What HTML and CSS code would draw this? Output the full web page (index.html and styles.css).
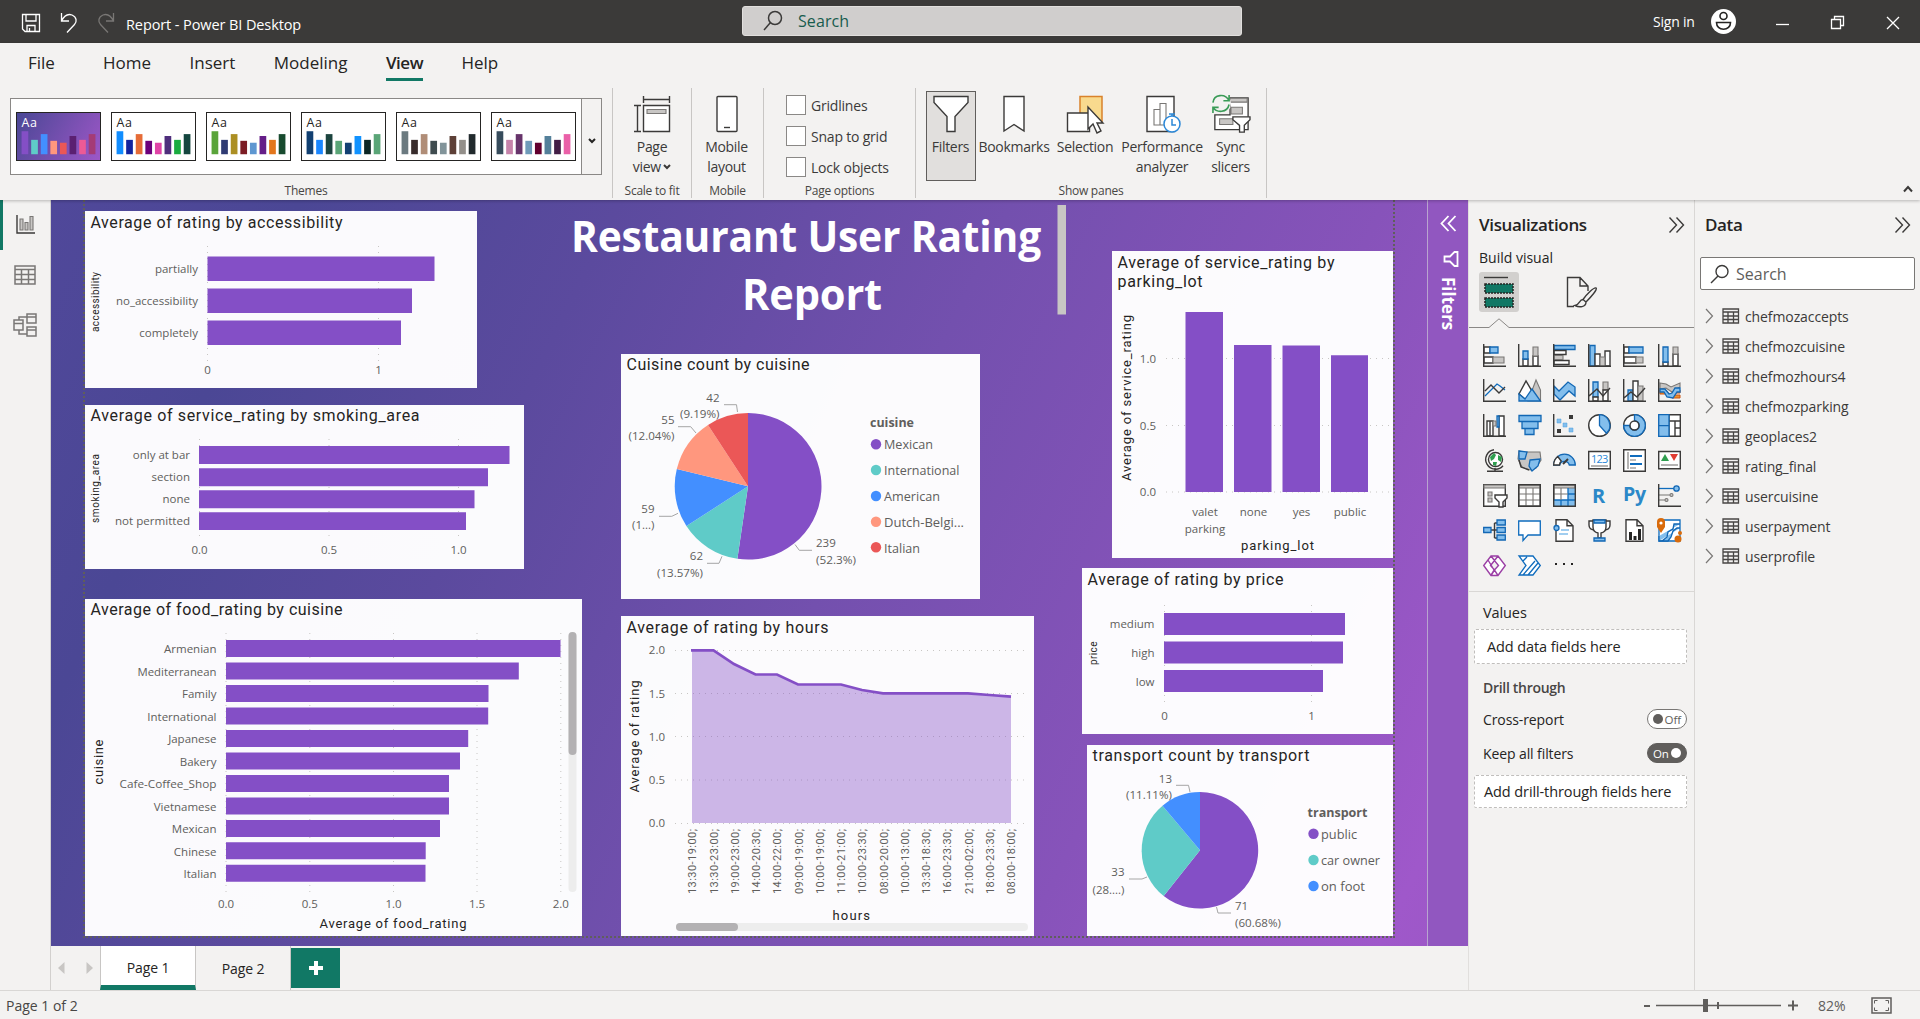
FILE: index.html
```html
<!DOCTYPE html>
<html lang="en">
<head>
<meta charset="utf-8">
<title>Report - Power BI Desktop</title>
<link rel="stylesheet" href="styles.css">
</head>
<body>
<header class="titlebar">
  <div class="quick">
    <svg width="20" height="20" viewBox="0 0 20 20"><path d="M1.5 1.5h17v17H4l-2.500-2.500zM5 1.500V8h10V1.500M6 18.500v-6h8v6M8.500 15v3.500"/></svg>
    <svg width="18" height="20" viewBox="0 0 18 20"><path d="M1.500 0v8h7.500M1.500 8C4 3 8 .5 12 2c5 2 5 7 2.500 9.500L7 19.500"/></svg>
    <svg class="dim" width="18" height="20" viewBox="0 0 18 20"><path d="M16.500 0v8H9M16.500 8C14 3 10 .5 6 2c-5 2-5 7-2.500 9.500L11 19.500"/></svg>
    <span>Report - Power BI Desktop</span>
  </div>
  <div class="topsearch">
    <svg width="20" height="22" viewBox="0 0 20 22"><circle cx="12" cy="8" r="6.500"/><path d="M7.500 12.500 1 20"/></svg>
    <span>Search</span>
  </div>
  <div class="account">
    <span>Sign in</span>
    <svg width="25" height="25" viewBox="0 0 25 25"><circle class="disc" cx="12.500" cy="12.500" r="12.500"/><circle class="ink" cx="12.500" cy="7" r="3.500"/><path class="ink" d="M5.500 13.500h14c0 4-3 6.700-7 6.700s-7-2.700-7-6.700z"/></svg>
  </div>
  <div class="winbtns">
    <svg width="14" height="14" viewBox="0 0 14 14"><path d="M0 8.500h13"/></svg>
    <svg width="14" height="14" viewBox="0 0 14 14"><path d="M.5 3.500h9v9h-9zM3.500 3.500v-3h9v9h-3"/></svg>
    <svg width="14" height="14" viewBox="0 0 14 14"><path d="M1 1l12 12M13 1 1 13"/></svg>
  </div>
</header>

<section class="ribbon">
  <nav class="tabs"><a>File</a><a>Home</a><a>Insert</a><a>Modeling</a><a class="on">View</a><a>Help</a></nav>
  <div class="groups">
    <div class="group themes">
      <div class="gallery">
        <div class="thumbs">
          <svg class="thumb first" viewBox="0 0 85 49"><text x="4" y="15">Aa</text><path stroke="#844fc6" d="M7.500 43V19"/><path stroke="#5fcbc8" d="M17.500 43V28"/><path stroke="#438fff" d="M27.500 43V22"/><path stroke="#ff977e" d="M37.500 43V29"/><path stroke="#eb5757" d="M47.500 43V31"/><path stroke="#5b2071" d="M57.500 43V24"/><path stroke="#ec5a96" d="M67.500 43V28"/><path stroke="#a43b76" d="M77.500 43V22"/></svg>
          <svg class="thumb" viewBox="0 0 85 49"><text x="4" y="15">Aa</text><path stroke="#118dff" d="M7.500 43V19"/><path stroke="#12239e" d="M17.500 43V28"/><path stroke="#e66c37" d="M27.500 43V22"/><path stroke="#6b007b" d="M37.500 43V29"/><path stroke="#e044a7" d="M47.500 43V31"/><path stroke="#4f2e7c" d="M57.500 43V24"/><path stroke="#1aab40" d="M67.500 43V28"/><path stroke="#15463f" d="M77.500 43V22"/></svg>
          <svg class="thumb" viewBox="0 0 85 49"><text x="4" y="15">Aa</text><path stroke="#5aa43a" d="M7.500 43V19"/><path stroke="#2f3b73" d="M17.500 43V28"/><path stroke="#ac8f23" d="M27.500 43V22"/><path stroke="#7c1c24" d="M37.500 43V29"/><path stroke="#5e97d1" d="M47.500 43V31"/><path stroke="#651e88" d="M57.500 43V24"/><path stroke="#e3761c" d="M67.500 43V28"/><path stroke="#184b2f" d="M77.500 43V22"/></svg>
          <svg class="thumb" viewBox="0 0 85 49"><text x="4" y="15">Aa</text><path stroke="#124072" d="M7.500 43V19"/><path stroke="#1a86ff" d="M17.500 43V28"/><path stroke="#1c443f" d="M27.500 43V22"/><path stroke="#5aa577" d="M37.500 43V29"/><path stroke="#124072" d="M47.500 43V31"/><path stroke="#1192ff" d="M57.500 43V24"/><path stroke="#0c2624" d="M67.500 43V28"/><path stroke="#5aa577" d="M77.500 43V22"/></svg>
          <svg class="thumb" viewBox="0 0 85 49"><text x="4" y="15">Aa</text><path stroke="#6b7a80" d="M7.500 43V19"/><path stroke="#382c2c" d="M17.500 43V28"/><path stroke="#b08d77" d="M27.500 43V22"/><path stroke="#3f4c4f" d="M37.500 43V29"/><path stroke="#82949a" d="M47.500 43V31"/><path stroke="#5d4037" d="M57.500 43V24"/><path stroke="#938f8a" d="M67.500 43V28"/><path stroke="#212a2d" d="M77.500 43V22"/></svg>
          <svg class="thumb" viewBox="0 0 85 49"><text x="4" y="15">Aa</text><path stroke="#374c5c" d="M7.500 43V19"/><path stroke="#c683aa" d="M17.500 43V28"/><path stroke="#67346b" d="M27.500 43V22"/><path stroke="#6f9bba" d="M37.500 43V29"/><path stroke="#62002e" d="M47.500 43V31"/><path stroke="#54809a" d="M57.500 43V24"/><path stroke="#431e46" d="M67.500 43V28"/><path stroke="#ea60a8" d="M77.500 43V22"/></svg>
        </div>
        <div class="more"><svg width="8" height="6" viewBox="0 0 8 6"><path d="M1 1l3 3 3-3"/></svg></div>
      </div>
      <div class="gname">Themes</div>
    </div>
    <div class="group scale">
      <div class="btns"><div class="btn">
        <svg width="36" height="38" viewBox="0 0 36 38"><path class="k" d="M9.500 1v7M35.500 1v7M9.500 4.500h26M0 10.500h7M0 36.500h7M3.500 10.500v26"/><path class="k w" d="M9.500 10.500h26v26h-26z"/><path class="g" d="M13 14.500h19v4H13z"/></svg>
        <span>Page<br>view <svg width="8" height="6" viewBox="0 0 8 6"><path class="k k2" d="M1 1l3 3 3-3"/></svg></span>
      </div></div>
      <div class="gname">Scale to fit</div>
    </div>
    <div class="group mobile">
      <div class="btns"><div class="btn">
        <svg width="22" height="38" viewBox="0 0 22 38"><rect class="k w" x="1" y="1.500" width="20" height="35" rx="1"/><path class="k" d="M8 32.500h6"/></svg>
        <span>Mobile<br>layout</span>
      </div></div>
      <div class="gname">Mobile</div>
    </div>
    <div class="group options">
      <div class="checks"><label><i></i>Gridlines</label><label><i></i>Snap to grid</label><label><i></i>Lock objects</label></div>
      <div class="gname">Page options</div>
    </div>
    <div class="group panes">
      <div class="btns">
        <div class="btn sel"><svg width="36" height="38" viewBox="0 0 36 38"><path class="k w" d="M1 1.500h34v6L22 21.500v15h-8v-15L1 7.500z"/></svg><span>Filters</span></div>
        <div class="btn b2"><svg width="22" height="38" viewBox="0 0 22 38"><path class="k w" d="M1 1.500h20v34.500l-10-6.500-10 6.500z"/></svg><span>Bookmarks</span></div>
        <div class="btn b3"><svg width="40" height="38" viewBox="0 0 40 38"><path d="M15 1.500h22v25H15z" fill="#f8da8e" stroke="#d9822b" stroke-width="1.500"/><path class="k w" d="M2.500 18h22v18.500h-22z"/><path class="k w" d="M23 12v22l5-5 4 9 4-2-4-8h6z"/></svg><span>Selection</span></div>
        <div class="btn b4"><svg width="36" height="38" viewBox="0 0 36 38"><path class="k w" d="M3 1.500h27v35H3z"/><path class="g" fill-opacity="0" d="M10 14.500h6V30h-6zM16 8.500h6V30h-6z"/><circle cx="28" cy="29" r="8" fill="#fff" stroke="#2b88d8" stroke-width="1.500"/><path d="M28 24v6h4M25 19h6M28 19v2" fill="none" stroke="#2b88d8" stroke-width="1.500"/></svg><span>Performance<br>analyzer</span></div>
        <div class="btn b5"><svg width="42" height="40" viewBox="0 0 42 40"><path class="k w" d="M20 3h19v33.500H4V21h16z"/><path class="g" d="M20 3.500h18v4H20zM21 13h12v7H21zM9 25h14v6H9z"/><path class="k w" d="M23 23h18v3l-6 6v7h-5v-7l-7-6z"/><circle cx="10" cy="9" r="11" fill="#f3f2f1"/><path d="M2 8c1-9 13-10 17-2M19 0v6h-6M19 10c-2 9-13 9-17 3M2 19v-6h6" fill="none" stroke="#3a9b57" stroke-width="1.700"/></svg><span>Sync<br>slicers</span></div>
      </div>
      <div class="gname">Show panes</div>
    </div>
    <div class="collapse"><svg width="10" height="8" viewBox="0 0 10 8"><path class="k k2" d="M1 6.500l4-4.500 4 4.500"/></svg></div>
  </div>
</section>

<main class="work">
  <nav class="rail">
    <div class="on"><svg width="19" height="19" viewBox="0 0 19 19"><path class="k" d="M1 0v18h18"/><path class="k g" d="M4 4h3v11H4zM9 7.500h3V15H9zM14 1.500h3V15h-3z"/></svg></div>
    <div><svg width="22" height="20" viewBox="0 0 22 20"><path class="m" d="M1 1h20v18H1zM1 4.500h20M1 9.500h20M1 14.500h20M7.500 4.500V19M14.500 4.500V19"/></svg></div>
    <div><svg width="24" height="24" viewBox="0 0 24 24"><path class="m" d="M1 7h9v10H1zM1 10.500h9M14 1h9v9h-9zM14 4h9M14 14h9v9h-9zM14 17h9M6 7V4h8M6 17v4h8"/></svg></div>
  </nav>

  <section class="center">
    <div class="canvas">
      <div class="page-edge"></div>
      <svg class="heading" viewBox="566 204 502 112"><text x="571" y="251.500" textLength="470" lengthAdjust="spacingAndGlyphs">Restaurant User Rating</text><text x="742" y="309.500" textLength="140" lengthAdjust="spacingAndGlyphs">Report</text><path fill="#c8c6c4" d="M1057.500 205h8.500v109.500h-8.500z"/></svg>

      <svg class="card c1" viewBox="85 211 392 177">
        <text class="h" x="90.500" y="228" textLength="252">Average of rating by accessibility</text>
        <path class="grid" d="M207.500 246v116M378.500 246v116"/>
        <path class="bar" d="M207.500 256.500h227v24.500h-227zM207.500 288.500h204.500v24.500H207.500zM207.500 320.500h193.500v24.500H207.500z"/>
        <g class="t e"><text x="198" y="273">partially</text><text x="198" y="305" textLength="82" lengthAdjust="spacingAndGlyphs">no_accessibility</text><text x="198" y="337">completely</text></g>
        <g class="t c"><text x="207.500" y="373.500">0</text><text x="378.500" y="373.500">1</text></g>
        <text class="a s" transform="translate(99 332) rotate(-90)" textLength="60">accessibility</text>
      </svg>

      <svg class="card c2" viewBox="85 405 439 164">
        <text class="h" x="90.500" y="421" textLength="329">Average of service_rating by smoking_area</text>
        <path class="grid" d="M199.500 439v101M329 439v101M458.500 439v101"/>
        <path class="bar" d="M199 446h310.500v18H199zM199 468.200h289v18H199zM199 490.200h275.500v18H199zM199 512.200h267v17.800H199z"/>
        <g class="t e"><text x="190" y="459">only at bar</text><text x="190" y="481">section</text><text x="190" y="503">none</text><text x="190" y="525" textLength="75" lengthAdjust="spacingAndGlyphs">not permitted</text></g>
        <g class="t c"><text x="199.500" y="554">0.0</text><text x="329" y="554">0.5</text><text x="458.500" y="554">1.0</text></g>
        <text class="a s" transform="translate(99 523) rotate(-90)" textLength="69">smoking_area</text>
      </svg>

      <svg class="card c3" viewBox="85 599 497 337">
        <text class="h" x="90.500" y="615" textLength="252">Average of food_rating by cuisine</text>
        <path class="grid" d="M226 633v259M309.800 633v259M393.500 633v259M477 633v259M560.800 633v259"/>
        <path class="bar" d="M226 640h334.500v17h-334.500zM226 662.500h292.800v17H226zM226 685h262.500v17h-262.500zM226 707.400h262.200v17H226zM226 730h242.200v17H226zM226 752.400H460v17H226zM226 775H449v17H226zM226 797.400H449v17H226zM226 820H440v17H226zM226 842.200h199.700v17H226zM226 864.700h199.500v17h-199.500z"/>
        <g class="t e"><text x="216.500" y="653">Armenian</text><text x="216.500" y="675.500" textLength="79" lengthAdjust="spacingAndGlyphs">Mediterranean</text><text x="216.500" y="698">Family</text><text x="216.500" y="720.500">International</text><text x="216.500" y="743">Japanese</text><text x="216.500" y="765.500">Bakery</text><text x="216.500" y="788" textLength="97" lengthAdjust="spacingAndGlyphs">Cafe-Coffee_Shop</text><text x="216.500" y="810.500">Vietnamese</text><text x="216.500" y="833">Mexican</text><text x="216.500" y="855.500">Chinese</text><text x="216.500" y="878">Italian</text></g>
        <g class="t c"><text x="226" y="908">0.0</text><text x="309.800" y="908">0.5</text><text x="393.500" y="908">1.0</text><text x="477" y="908">1.5</text><text x="560.800" y="908">2.0</text></g>
        <text class="a" x="319.500" y="928" textLength="147">Average of food_rating</text>
        <text class="a" transform="translate(103 784.500) rotate(-90)" textLength="45">cuisine</text>
        <rect class="track" x="568.500" y="632" width="8" height="260" rx="4"/><rect class="sthumb" x="568.500" y="632" width="8" height="123" rx="4"/>
      </svg>

      <svg class="card c4" viewBox="621 354 359 245">
        <text class="h" x="626.500" y="370" textLength="183">Cuisine count by cuisine</text>
        <path fill="#844fc6" d="M748 486.300V413a73.300 73.300 0 1 1-10.600 145.800z"/>
        <path fill="#5fcbc8" d="M748 486.300 737.400 558.800A73.300 73.300 0 0 1 686.400 526.100z"/>
        <path fill="#438fff" d="M748 486.300 686.400 526.100A73.300 73.300 0 0 1 676.800 469.100z"/>
        <path fill="#ff977e" d="M748 486.300 676.800 469.100A73.300 73.300 0 0 1 708 424.900z"/>
        <path fill="#eb5757" d="M748 486.300 708 424.900A73.300 73.300 0 0 1 748 413z"/>
        <path class="lead" d="M724 404.700h12.500l1 7.300M678 426.700h12.700l5.300 6.300M659 516.300h12.800l6.200-3M707 563.300h12l3-7M795 544.500l4.300 5.800H812"/>
        <g class="t e"><text x="719.500" y="402">42</text><text x="719.500" y="418" textLength="39.500" lengthAdjust="spacingAndGlyphs">(9.19%)</text><text x="674.500" y="424">55</text><text x="674.500" y="440" textLength="46" lengthAdjust="spacingAndGlyphs">(12.04%)</text><text x="654.500" y="512.500">59</text><text x="654.500" y="529">(1...)</text><text x="703" y="560">62</text><text x="703" y="577" textLength="46" lengthAdjust="spacingAndGlyphs">(13.57%)</text></g>
        <g class="t"><text x="816" y="547">239</text><text x="816" y="564" textLength="40" lengthAdjust="spacingAndGlyphs">(52.3%)</text></g>
        <text class="lg b" x="870" y="427" textLength="44" lengthAdjust="spacingAndGlyphs">cuisine</text>
        <g class="lg"><text x="884" y="449" textLength="49" lengthAdjust="spacingAndGlyphs">Mexican</text><text x="884" y="475" textLength="75.500" lengthAdjust="spacingAndGlyphs">International</text><text x="884" y="501" textLength="56" lengthAdjust="spacingAndGlyphs">American</text><text x="884" y="527" textLength="80" lengthAdjust="spacingAndGlyphs">Dutch-Belgi...</text><text x="884" y="553" textLength="36" lengthAdjust="spacingAndGlyphs">Italian</text></g>
        <circle cx="876" cy="444.300" r="5.200" fill="#844fc6"/><circle cx="876" cy="470" r="5.200" fill="#5fcbc8"/><circle cx="876" cy="496" r="5.200" fill="#438fff"/><circle cx="876" cy="521.700" r="5.200" fill="#ff977e"/><circle cx="876" cy="547.300" r="5.200" fill="#eb5757"/>
      </svg>

      <svg class="card c5" viewBox="621 616 413 320">
        <text class="h" x="626.500" y="633" textLength="202">Average of rating by hours</text>
        <path class="grid" d="M675 650.500h352M675 693.500h352M675 736.500h352M675 780h352M675 823.500h352"/>
        <path fill="#844fc6" fill-opacity=".4" d="M692 823V650.300h21.500L734 664l21.500 10.500h21.500l21 10h43l21 5.500 21 3.300h85l21.500 1.700 21.500 1.700V823z"/>
        <path fill="none" stroke="#844fc6" stroke-width="2.700" d="M691 650.300h22.500L734 664l21.500 10.500h21.500l21 10h43l21 5.500 21 3.300h85l21.500 1.700 21.500 1.700"/>
        <g class="t e"><text x="665" y="654">2.0</text><text x="665" y="698">1.5</text><text x="665" y="741">1.0</text><text x="665" y="784">0.5</text><text x="665" y="827">0.0</text></g>
        <g class="v">
          <text transform="translate(696 894) rotate(-90)" textLength="65">13:30-19:00;</text><text transform="translate(718 894) rotate(-90)" textLength="65">13:30-23:00;</text><text transform="translate(739 894) rotate(-90)" textLength="65">19:00-23:00;</text><text transform="translate(760 894) rotate(-90)" textLength="65">14:00-20:30;</text><text transform="translate(781 894) rotate(-90)" textLength="65">14:00-22:00;</text><text transform="translate(803 894) rotate(-90)" textLength="65">09:00-19:00;</text><text transform="translate(824 894) rotate(-90)" textLength="65">10:00-19:00;</text><text transform="translate(845 894) rotate(-90)" textLength="65">11:00-21:00;</text><text transform="translate(866 894) rotate(-90)" textLength="65">10:00-23:30;</text><text transform="translate(888 894) rotate(-90)" textLength="65">08:00-20:00;</text><text transform="translate(909 894) rotate(-90)" textLength="65">10:00-13:00;</text><text transform="translate(930 894) rotate(-90)" textLength="65">13:30-18:30;</text><text transform="translate(951 894) rotate(-90)" textLength="65">16:00-23:30;</text><text transform="translate(973 894) rotate(-90)" textLength="65">21:00-02:00;</text><text transform="translate(994 894) rotate(-90)" textLength="65">18:00-23:30;</text><text transform="translate(1015 894) rotate(-90)" textLength="65">08:00-18:00;</text>
        </g>
        <text class="a" x="832.500" y="920" textLength="37.500">hours</text>
        <text class="a" transform="translate(639 792.500) rotate(-90)" textLength="112">Average of rating</text>
        <rect class="track" x="676" y="923" width="352" height="8" rx="4"/><rect class="sthumb" x="676" y="923" width="62" height="8" rx="4"/>
      </svg>

      <svg class="card c6" viewBox="1112 251 281 307">
        <text class="h" x="1117.500" y="268" textLength="217">Average of service_rating by</text><text class="h" x="1117.500" y="287" textLength="85">parking_lot</text>
        <path class="grid" d="M1166 358.500h225M1166 425.500h225M1166 492h225"/>
        <path class="bar" d="M1185.500 312h37.500v180h-37.500zM1234 345h37.500v147H1234zM1282.500 345.500h37.500V492h-37.500zM1331 355.200h37V492h-37z"/>
        <g class="t e"><text x="1156" y="362.500">1.0</text><text x="1156" y="429.500">0.5</text><text x="1156" y="496">0.0</text></g>
        <g class="t c"><text x="1205" y="516">valet</text><text x="1205" y="533">parking</text><text x="1253.500" y="516">none</text><text x="1301.500" y="516">yes</text><text x="1350" y="516">public</text></g>
        <text class="a" x="1241" y="550" textLength="73">parking_lot</text>
        <text class="a" transform="translate(1131 481) rotate(-90)" textLength="166">Average of service_rating</text>
      </svg>

      <svg class="card c7" viewBox="1082 568 311 166">
        <text class="h" x="1087.500" y="585" textLength="196">Average of rating by price</text>
        <path class="grid" d="M1164.500 605v101M1311.500 605v101"/>
        <path class="bar" d="M1164 613h181v22h-181zM1164 641.500h179v22h-179zM1164 670h159v22h-159z"/>
        <g class="t e"><text x="1154.500" y="628">medium</text><text x="1154.500" y="657">high</text><text x="1154.500" y="686">low</text></g>
        <g class="t c"><text x="1164.500" y="720">0</text><text x="1311.500" y="720">1</text></g>
        <text class="a s" transform="translate(1097 665) rotate(-90)" textLength="23.500">price</text>
      </svg>

      <svg class="card c8" viewBox="1087 745 306 191">
        <text class="h" x="1092.500" y="761" textLength="217">transport count by transport</text>
        <path fill="#844fc6" d="M1200 850.300V792a58.300 58.300 0 1 1-36.300 104z"/>
        <path fill="#5fcbc8" d="M1200 850.300 1163.700 896A58.300 58.300 0 0 1 1162.500 805.700z"/>
        <path fill="#438fff" d="M1200 850.300 1162.500 805.700A58.300 58.300 0 0 1 1200 792z"/>
        <path class="lead" d="M1176 785.300h12.500l1.500 6.700M1129 879h13l5-2M1216.500 907l1.500 6h13"/>
        <g class="t e"><text x="1172" y="783">13</text><text x="1172" y="799" textLength="46" lengthAdjust="spacingAndGlyphs">(11.11%)</text><text x="1124.500" y="876">33</text><text x="1124.500" y="893.500" textLength="32" lengthAdjust="spacingAndGlyphs">(28....)</text></g>
        <g class="t"><text x="1235" y="910">71</text><text x="1235" y="927" textLength="46" lengthAdjust="spacingAndGlyphs">(60.68%)</text></g>
        <text class="lg b" x="1307.500" y="817" textLength="60" lengthAdjust="spacingAndGlyphs">transport</text>
        <g class="lg"><text x="1321" y="839" textLength="36" lengthAdjust="spacingAndGlyphs">public</text><text x="1321" y="865" textLength="59" lengthAdjust="spacingAndGlyphs">car owner</text><text x="1321" y="891" textLength="44" lengthAdjust="spacingAndGlyphs">on foot</text></g>
        <circle cx="1313.500" cy="833.700" r="5.200" fill="#844fc6"/><circle cx="1313.500" cy="860" r="5.200" fill="#5fcbc8"/><circle cx="1313.500" cy="886" r="5.200" fill="#438fff"/>
      </svg>

      <aside class="filters">
        <svg width="17" height="17" viewBox="0 0 17 17"><path d="M8.500 1 1.500 8.500l7 7.500M15.500 1l-7 7.500 7 7.500"/></svg>
        <svg width="16" height="16" viewBox="0 0 16 16"><path d="M14.500 1v14h-3L7 10.500H1.500v-5H7L11.500 1z"/></svg>
        <span>Filters</span>
      </aside>
    </div>
    <div class="pages">
      <div class="arrows"><svg width="7" height="12" viewBox="0 0 7 12"><path d="M6.500 0v12L0 6z"/></svg><svg width="7" height="12" viewBox="0 0 7 12"><path d="M.5 0v12L7 6z"/></svg></div>
      <div class="ptab on">Page 1</div><div class="ptab">Page 2</div>
      <div class="add"><svg width="14" height="14" viewBox="0 0 14 14"><path d="M7 0v14M0 7h14"/></svg></div>
    </div>
  </section>

  <aside class="vis">
    <div class="phead"><b>Visualizations</b><svg width="17" height="16" viewBox="0 0 17 16"><path class="k" d="M1.500 .5 8.500 8l-7 7.500M8.500 .5l7 7.500-7 7.500"/></svg></div>
    <div class="build">Build visual</div>
    <div class="modes">
      <div class="mode on"><svg width="30" height="32" viewBox="0 0 30 32"><path class="k" d="M0 1.500h24"/><path d="M1 8h28v9H1zM1 22h28v9H1z" fill="#117865" stroke="#252423" stroke-width="1.500" stroke-dasharray="2 1"/></svg></div>
      <div class="mode"><svg width="32" height="32" viewBox="0 0 32 32"><path class="k" d="M8 30.500H1.500v-29H14l8 8.500v5M14 1.500V10h8M30 12c2 1-5 9-10 14l-3-2.500C21 18 28 11 30 12zM17 23.500c-4 0-3 5-8 6 4 2 11 2 11-3.500"/></svg></div>
    </div>
    <svg class="notch" width="225" height="11" viewBox="0 0 225 11"><path d="M0 9.500h20L30 .8l10 8.700h185"/></svg>
    <div class="icons">
      <svg viewBox="0 0 23 23"><path class="x w" d="M1 3h6v6H1zM1 13h9v6H1z"/><path class="bl" d="M7 3h8v6H7z"/><path class="gr" d="M10 13h11v6H10z"/><path class="x" d="M.7 0v22.300H23"/></svg>
      <svg viewBox="0 0 23 23"><path class="x w" d="M5 15h5v7H5zM15 12h5v10h-5z"/><path class="bl" d="M5 7h5v8H5z"/><path class="gr" d="M15 3h5v9h-5z"/><path class="x" d="M.7 0v22.300H23"/></svg>
      <svg viewBox="0 0 23 23"><path class="bl" d="M1 1.500h21v4H1z"/><path class="x w" d="M1 6.500h12v4H1zM1 16.500h15v4H1z"/><path class="gr" d="M1 11.500h9v4H1z"/><path class="x" d="M.7 0v22.300H23"/></svg>
      <svg viewBox="0 0 23 23"><path class="bl" d="M2 1.500h5V22H2z"/><path class="x w" d="M7 10h5v12H7zM17 7h5v15h-5z"/><path class="gr" d="M12 13h5v9h-5z"/><path class="x" d="M.7 0v22.300H23"/></svg>
      <svg viewBox="0 0 23 23"><path class="x w" d="M1 3h5v6H1zM1 13h12v6H1z"/><path class="bl" d="M6 3h14v6H6z"/><path class="gr" d="M13 13h7v6h-7z"/><path class="x" d="M.7 0v22.300H23"/></svg>
      <svg viewBox="0 0 23 23"><path class="x w" d="M5 18h5v4H5zM15 10h5v12h-5z"/><path class="bl" d="M5 3h5v15H5z"/><path class="gr" d="M15 3h5v7h-5z"/><path class="x" d="M.7 0v22.300H23"/></svg>

      <svg viewBox="0 0 23 23"><path class="bs" d="M2 17 14 5l3 2 5 4"/><path class="x" d="M2 12l6-6 8 8 6-6M.7 0v22.300H23"/></svg>
      <svg viewBox="0 0 23 23"><path class="gr" d="M10 22 18 1l4.500 10v11z"/><path class="x w" d="M1 15 8 2l7 12-7 7z"/><path class="bl" d="M1 15l6 5 7-10 8.500 12H1z"/></svg>
      <svg viewBox="0 0 23 23"><path class="bl" d="M1 7l5 5 9-9 7 5v9l-6-5-9 9-6-6z"/><path class="x" d="M.7 0v22.300H23"/></svg>
      <svg viewBox="0 0 23 23"><path class="bl" d="M5 3h5v15H5z"/><path class="gr" d="M15 3h5v8h-5z"/><path class="x w" d="M15 11h5v11h-5zM5 18h5v4H5z"/><path class="x" d="M.7 0v22.300H23M1 17l8-7 6 7 7-8"/></svg>
      <svg viewBox="0 0 23 23"><path class="bl" d="M5 11h5v11H5z"/><path class="x w" d="M10 2h5v20h-5z"/><path class="gr" d="M15 7h5v15h-5z"/><path class="x" d="M.7 0v22.300H23M1 19l7-6 6 5 8-9"/></svg>
      <svg viewBox="0 0 23 23"><path d="M2 11h6l4 5h10v3h-8l-4-4H2z" fill="#e8912d" stroke="#ca5010"/><path d="M14 11h8v3h-8z" fill="#e8912d" stroke="#ca5010"/><path class="gr" d="M2 4l6 1 5 3 9-4v4l-8 5-6-4-6 1z"/><path class="bl" d="M2 10h5l4 5 3-1 3-5h5v4h-3l-4 6-6-1-3-5H2z"/><path class="x" d="M.7 0v22.300H23"/></svg>

      <svg viewBox="0 0 23 23"><path class="x w" d="M4 7h6v15H4zM16 2h5v20h-5z"/><path class="x" d="M7 7v15"/><path class="bl" d="M14 2h2v11h-2z"/><path class="gr" d="M10 7h3v5h-3z"/><path class="x" d="M.7 0v22.300H23"/></svg>
      <svg viewBox="0 0 23 23"><path class="bl" d="M1 1.500h22v6H1zM4 7.500h16v7H4zM7 14.500h9v6H7z"/></svg>
      <svg viewBox="0 0 23 23"><path fill="#3b3a39" d="M16 1h4v4h-4zM4 15h4v4H4z"/><path fill="#83beec" stroke="#4a9ee0" stroke-width=".5" d="M4 5h4v4H4zM10 9h4v4h-4zM16 14h4v4h-4z"/><path class="x" d="M.7 0v22.300H23"/></svg>
      <svg viewBox="0 0 23 23"><circle class="x w" cx="11.500" cy="11.500" r="10.800"/><path class="bl" d="M11.500 11.500V.7a10.800 10.800 0 0 1 7 18.600z"/></svg>
      <svg viewBox="0 0 23 23"><circle class="x w" cx="11.500" cy="11.500" r="10.800"/><path class="bl" d="M11.500 .7a10.800 10.800 0 1 1-10.800 10.800h6a4.800 4.800 0 1 0 4.800-4.800z"/><circle class="x" cx="11.500" cy="11.500" r="4.500"/></svg>
      <svg viewBox="0 0 23 23"><path class="x w" d="M11 .7h11.300v21.600H11zM11 7h11.300M17 7v15M17 14h5.300"/><path class="bl" d="M.7 .7H11v11H.7zM.7 11.700H11v10.600H.7z"/></svg>

      <svg viewBox="0 0 23 23"><circle class="x w" cx="12.500" cy="10.500" r="7"/><path fill="#2f9e4f" d="M7 8l4-4 2 2-2 4-3 2zM15 6l4 2-1 5-3-2zM10 13l4 0-1 4-3-1z"/><path class="x" d="M11 .7a9.800 9.800 0 1 0 9 16M12 19v3M4 22.300h16"/></svg>
      <svg viewBox="0 0 23 23"><path class="gr" d="M1 2l5 1h16l1 8-5 8-6 2-8-3-4-8z"/><path class="bl" d="M1 2l8 1-2 7H1zM12 11l10-1-2 7-6 5-3-5z"/><path class="x" d="M1 11l2 7 8 3"/></svg>
      <svg viewBox="0 0 23 23"><path class="bl" d="M.7 16a10.800 10.800 0 0 1 21.600 0h-6a5 5 0 0 0-9.600 0z"/><path class="x w" d="M.7 16a11 11 0 0 1 4-8.500l3.500 4.500q-1.500 1.500-1.700 4z"/><path class="x k2" d="M10 15l5-5"/></svg>
      <svg viewBox="0 0 23 23"><path class="x w" d="M.7 2.500h21.600v17.300H.7z"/><text x="3" y="14" class="num" textLength="17">123</text><path class="gr" d="M3 17h17"/></svg>
      <svg viewBox="0 0 23 23"><path class="x w" d="M.7 .7h21.600v21.600H.7z"/><path class="gr" d="M5 3v17M7 11h6M7 19h6"/><path class="bs k2" d="M7 7h12M7 15h12"/></svg>
      <svg viewBox="0 0 23 23"><path class="x w" d="M.7 2.500h21.600v17.300H.7z"/><path fill="#2f9e4f" d="M3 12l4-7 4 7z"/><path fill="#e03c32" d="M12 5h8l-4 7z"/><path class="gr" d="M3 16h17"/></svg>

      <svg viewBox="0 0 23 23"><path class="x w" d="M.7 .7h21.600v21.600H.7z"/><path class="gr" d="M1 1h21v3H1zM5 8h4v4H5zM5 14h4v4H5z"/><path class="x w" d="M12 11h12v3l-4 4v5h-4v-5l-4-4z"/></svg>
      <svg viewBox="0 0 23 23"><path class="x w" d="M.7 .7h21.600v21.600H.7z"/><path class="gr" d="M1 1h21v3H1z"/><path class="gr" fill-opacity="0" d="M1 10h21M1 16h21M8 4v18M15 4v18"/><path class="x" d="M.7 .7h21.600v21.600H.7z"/></svg>
      <svg viewBox="0 0 23 23"><path class="x w" d="M.7 .7h21.600v21.600H.7z"/><path fill="#83beec" d="M15 4h7v18H1v-6h14z"/><path class="gr" d="M1 1h21v3H1z"/><path class="bs" d="M15 10h7M1 16h21M8 16v6M15 4v18"/><path class="gr" fill-opacity="0" d="M1 10h14M8 4v12"/><path class="x" d="M.7 .7h21.600v21.600H.7z"/></svg>
      <svg viewBox="0 0 23 23"><text class="code" x="4" y="19" textLength="13" lengthAdjust="spacingAndGlyphs">R</text></svg>
      <svg viewBox="0 0 23 23"><text class="code" x="0" y="17" textLength="23" lengthAdjust="spacingAndGlyphs">Py</text></svg>
      <svg viewBox="0 0 23 23"><path class="gr" fill-opacity="0" d="M1 11h11M1 16h6"/><circle class="gr" cx="13.500" cy="11" r="1.500"/><circle class="gr" cx="8.500" cy="16" r="1.500"/><path class="bs" d="M1 4.500h15"/><circle class="bl" cx="18.500" cy="4.500" r="2.700"/><path class="x" d="M.7 0v22.300H23"/></svg>

      <svg viewBox="0 0 23 23"><path class="x" d="M8 11h6M11.500 4v15M11.500 4H14M11.500 19H14"/><path class="bl" d="M.7 8.500H8v5H.7zM14 1h8.300v5H14zM14 8.500h8.300v5H14zM14 16h8.300v5H14z"/></svg>
      <svg viewBox="0 0 23 23"><path class="bs w" d="M.7 2h21.600v14H10l-5 5.500V16H.7z"/></svg>
      <svg viewBox="0 0 23 23"><path class="x w" d="M3 .7h11l6 6v15.600H3zM14 .7v6h6"/><path fill="none" stroke="#83beec" stroke-width="1.300" d="M8 11h8M6 15h9"/><circle class="bl" cx="3.500" cy="9" r="2.500"/></svg>
      <svg viewBox="0 0 23 23"><path class="x w" d="M5 2H1v4q0 5 6 5M18 2h4v4q0 5-6 5"/><path class="x w" d="M5 1h13v7q0 5-5 6v5h-3v-5q-5-1-5-6z"/><path class="bl" d="M6 1h11v3H6zM6 19h11v3H6z"/></svg>
      <svg viewBox="0 0 23 23"><path class="x w" d="M3 .7h11l6 6v15.600H3zM14 .7v6h6"/><path fill="#252423" d="M6 13h3v8H6zM10.500 17h3v4h-3zM15 10h3v11h-3z"/></svg>
      <svg viewBox="0 0 23 23"><path class="bs w" d="M1 1h21v21H1z"/><path class="bl" d="M22 5h-6l-1 5-5 3-1 5-5 4H1v-5M1 22h9l3-4 2-6 4-3h3"/><path fill="#d96b0b" d="M-1 3q0-4 4-4t4 4v5l-4 6-4-6z"/><circle cx="3" cy="4" r="1.600" fill="#fff"/><circle cx="20" cy="20" r="3.500" fill="#d96b0b"/><circle cx="22" cy="14" r="2" fill="#d96b0b"/></svg>

      <svg viewBox="0 0 23 23"><path fill="#fff" stroke="#9b3fa5" stroke-width="1.400" d="M8 2h7l7.300 9.500L15 21.500H8L.7 11.500zM8 2l3.500 4.500L15 2M11.500 6.500l-4 5 4 4.500 4-4.500zM8 21.500l3.500-5.500 3.500 5.500M5 6l6 10-3 5"/></svg>
      <svg viewBox="0 0 23 23"><path class="bs w" d="M1 2h14l7.300 9.500L15 21H1l7-9.500zM5 7l4-4M5 21l12-14M10 21l10-12"/></svg>
      <svg viewBox="0 0 23 23"><path fill="#252423" d="M2 9h2v2H2zM10 9h2v2h-2zM18 9h2v2h-2z"/></svg>
    </div>
    <div class="wells">
      <div class="lab">Values</div>
      <div class="drop d1">Add data fields here</div>
      <div class="lab strong">Drill through</div>
      <div class="row">Cross-report<span class="toggle"><i></i>Off</span></div>
      <div class="row">Keep all filters<span class="toggle dark">On<i></i></span></div>
      <div class="drop d2">Add drill-through fields here</div>
    </div>
  </aside>

  <aside class="data">
    <div class="phead"><b>Data</b><svg width="17" height="16" viewBox="0 0 17 16"><path class="k" d="M1.500 .5 8.500 8l-7 7.500M8.500 .5l7 7.500-7 7.500"/></svg></div>
    <div class="dsearch"><svg width="20" height="20" viewBox="0 0 20 20"><circle class="k" cx="12" cy="7.500" r="6"/><path class="k" d="M8 12 1 19"/></svg>Search</div>
    <ul class="tree">
      <li><svg viewBox="0 0 34 16"><path class="n" d="M1 1l6.500 7L1 15"/><path class="f" d="M18 1h15.500v14H18zM18 4h15.500M18 8h15.500M18 11.500h15.500M23 4v11M28.500 4v11"/></svg>chefmozaccepts</li>
      <li><svg viewBox="0 0 34 16"><path class="n" d="M1 1l6.500 7L1 15"/><path class="f" d="M18 1h15.500v14H18zM18 4h15.500M18 8h15.500M18 11.500h15.500M23 4v11M28.500 4v11"/></svg>chefmozcuisine</li>
      <li><svg viewBox="0 0 34 16"><path class="n" d="M1 1l6.500 7L1 15"/><path class="f" d="M18 1h15.500v14H18zM18 4h15.500M18 8h15.500M18 11.500h15.500M23 4v11M28.500 4v11"/></svg>chefmozhours4</li>
      <li><svg viewBox="0 0 34 16"><path class="n" d="M1 1l6.500 7L1 15"/><path class="f" d="M18 1h15.500v14H18zM18 4h15.500M18 8h15.500M18 11.500h15.500M23 4v11M28.500 4v11"/></svg>chefmozparking</li>
      <li><svg viewBox="0 0 34 16"><path class="n" d="M1 1l6.500 7L1 15"/><path class="f" d="M18 1h15.500v14H18zM18 4h15.500M18 8h15.500M18 11.500h15.500M23 4v11M28.500 4v11"/></svg>geoplaces2</li>
      <li><svg viewBox="0 0 34 16"><path class="n" d="M1 1l6.500 7L1 15"/><path class="f" d="M18 1h15.500v14H18zM18 4h15.500M18 8h15.500M18 11.500h15.500M23 4v11M28.500 4v11"/></svg>rating_final</li>
      <li><svg viewBox="0 0 34 16"><path class="n" d="M1 1l6.500 7L1 15"/><path class="f" d="M18 1h15.500v14H18zM18 4h15.500M18 8h15.500M18 11.500h15.500M23 4v11M28.500 4v11"/></svg>usercuisine</li>
      <li><svg viewBox="0 0 34 16"><path class="n" d="M1 1l6.500 7L1 15"/><path class="f" d="M18 1h15.500v14H18zM18 4h15.500M18 8h15.500M18 11.500h15.500M23 4v11M28.500 4v11"/></svg>userpayment</li>
      <li><svg viewBox="0 0 34 16"><path class="n" d="M1 1l6.500 7L1 15"/><path class="f" d="M18 1h15.500v14H18zM18 4h15.500M18 8h15.500M18 11.500h15.500M23 4v11M28.500 4v11"/></svg>userprofile</li>
    </ul>
  </aside>
</main>

<footer class="status">
  <span>Page 1 of 2</span>
  <svg class="zoomer" width="154" height="16" viewBox="0 0 154 16"><path d="M0 9h6M144 8.500h10M149 3.500v10" stroke-width="2"/><path d="M12 8.500h125" stroke-width="1.300"/><path d="M61.500 2v13" stroke-width="5"/><path d="M74 5v7" stroke-width="2"/></svg>
  <span class="pct">82%</span>
  <svg class="fit" width="21" height="17" viewBox="0 0 21 17"><path d="M1 1h19v15H1z" stroke-width="1.500"/><path d="M3.500 6.500v-3h3M14.500 3.500h3v3M17.500 10.500v3h-3M6.500 13.500h-3v-3"/></svg>
</footer>
</body>
</html>
```
FILE: styles.css
```css
* { box-sizing: border-box; }
body {
  margin: 0; width: 1920px; height: 1019px; overflow: hidden;
  display: flex; flex-direction: column;
  font-family: "Open Sans", "Noto Sans", sans-serif; font-size: 14px; color: #252423;
  background: #f3f2f1; letter-spacing: -.2px;
}
svg { display: block; flex: none; overflow: visible; }
svg path, svg circle { fill: none; }
svg path[fill], svg circle[fill] { fill: revert-layer; }

.k { stroke: #3b3a39; stroke-width: 1.4; }
.k2 { stroke-width: 2 !important; }
svg .w { fill: #fff; }
svg .g, svg .gr { fill: #c8c6c4; stroke: #797775; stroke-width: 1.1; }
.m { stroke: #797775; stroke-width: 1.5; }

.titlebar { height: 43px; flex: none; background: #3b3a39; color: #fff; display: flex; align-items: center; }
.quick { width: 742px; display: flex; align-items: center; padding-left: 21px; padding-top: 2px; }
.quick svg { stroke: #fff; stroke-width: 1.3; margin-right: 19px; }
.quick svg.dim { stroke: #797775; margin-right: 11px; }
.quick span { padding-top: 3px; font-size: 14.500px; letter-spacing: -.1px; }
.topsearch { width: 500px; height: 30px; background: #d0cecd; border-radius: 3px; border: 1px solid #e1dfdd; display: flex; align-items: center; padding-left: 20px; gap: 15px; color: #185c4d; font-size: 16px; letter-spacing: .1px; margin-top: -1px; }
.topsearch svg { stroke: #3b3a39; stroke-width: 1.5; }
.account { margin-left: 411px; width: 83px; display: flex; align-items: center; justify-content: space-between; }
.account .disc { fill: #fff; }
.account .ink { stroke: #252423; stroke-width: 1.6; }
.account span { letter-spacing: -.2px; }
.winbtns { display: flex; gap: 41px; margin-left: 40px; padding-top: 3px; }
.winbtns svg { stroke: #fff; stroke-width: 1.3; }

.ribbon { height: 157px; flex: none; display: flex; flex-direction: column; box-shadow: 0 1px 3px rgba(0,0,0,.25); position: relative; z-index: 2; background: #f3f2f1; }
.tabs { height: 45px; display: flex; padding-left: 28px; font-size: 17px; letter-spacing: 0; }
.tabs a { height: 38px; padding-top: 8px; line-height: 24px; margin-right: 38.500px; white-space: nowrap; }
.tabs a:first-child { margin-right: 48px; }
.tabs a.on { font-weight: 600; border-bottom: 3px solid #117865; letter-spacing: -.5px; }
.groups { display: flex; height: 112px; margin-bottom: -2px; }
.group { display: flex; flex-direction: column; justify-content: space-between; align-items: center; border-right: 1px solid #c8c6c4; color: #3b3a39; height: 110px; }
.gname { font-size: 12px; line-height: 18px; margin-bottom: -1.500px; letter-spacing: -.25px; color: #484644; }
.themes { width: 613px; padding-top: 10px; }
.gallery { width: 592px; height: 77px; border: 1px solid #8a8886; display: flex; background: #fff; }
.thumbs { flex: 1; display: flex; align-items: center; justify-content: space-between; padding: 0 5px; }
.thumb { width: 85px; height: 49px; background: #fff; border: 1px solid #252423; stroke-width: 7; overflow: hidden; }
.thumb text { font-size: 13px; letter-spacing: .5px; fill: #252423; stroke: none; }
.thumb.first { background: linear-gradient(120deg, #4a4795, #9d57c7); }
.thumb.first text { fill: #fff; }
.more { width: 20px; background: #f3f2f1; border-left: 1px solid #8a8886; display: grid; place-items: center; padding-top: 8px; }
.more svg { stroke: #252423; stroke-width: 2; }
.scale { width: 79px; } .mobile { width: 72px; } .options { width: 152px; } .panes { width: 351px; }
.mobile .btn { margin-left: -2px; }
.btns { display: flex; padding-top: 3px; }
.btn { height: 90px; display: flex; flex-direction: column; align-items: center; padding-top: 3px; border: 1px solid transparent; }
.btn > svg { height: 38px; margin-bottom: 4px; }
.btn span { text-align: center; line-height: 20px; font-size: 14px; letter-spacing: -.3px; white-space: nowrap; }
.btn span svg { display: inline-block; vertical-align: 2px; margin-left: -1px; }
.btn.sel { width: 50px; background: #e1dfdd; border-color: #605e5c; }
.b2 { width: 77px; } .b3 { width: 65px; } .b4 { width: 89px; } .b5 { width: 48px; }
.panes .btns { width: 331px; }
.checks { align-self: flex-start; padding: 7px 0 0 22px; display: flex; flex-direction: column; gap: 11px; }
.checks label { height: 20px; display: flex; align-items: center; gap: 5px; line-height: 20px; padding-top: 1px; letter-spacing: -.2px; }
.checks i { width: 20px; height: 20px; margin-top: -1px; background: #fff; border: 1px solid #8a8886; }
.collapse { flex: 1; display: flex; justify-content: flex-end; align-items: flex-end; padding: 0 7px 7px 0; }

.work { flex: none; height: 790px; display: flex; }
.rail { width: 51px; border-right: 1px solid #d2d0ce; }
.rail div { height: 50px; display: grid; place-items: center; padding: 0 4px 1px 4px; }
.rail div.on { border-left: 3px solid #117865; padding-left: 2px; }
.center { width: 1417px; display: flex; flex-direction: column; }
.canvas { height: 746px; position: relative; overflow: hidden; background: linear-gradient(116deg, #50489a 0%, #4b4795 14%, #5b4a9e 32%, #7350ae 54%, #8753ba 75%, #9f58ca 95%, #9c57c6 100%); }
.page-edge { position: absolute; left: 32px; top: 0; width: 1312px; height: 738px; border: 2px dotted #605e5c; border-top: 0; }
.heading { position: absolute; left: 515px; top: 4px; width: 502px; height: 112px; }
.heading text { font-size: 43px; font-weight: 700; fill: #fff; }
.card { position: absolute; background: rgba(255,255,255,.975); overflow: hidden; letter-spacing: 0; }
.c1 { left: 34px; top: 11px; width: 392px; height: 177px; }
.c2 { left: 34px; top: 205px; width: 439px; height: 164px; }
.c3 { left: 34px; top: 399px; width: 497px; height: 337px; }
.c4 { left: 570px; top: 154px; width: 359px; height: 245px; }
.c5 { left: 570px; top: 416px; width: 413px; height: 320px; }
.c6 { left: 1061px; top: 51px; width: 281px; height: 307px; }
.c7 { left: 1031px; top: 368px; width: 311px; height: 166px; }
.c8 { left: 1036px; top: 545px; width: 306px; height: 191px; }
.h { font: 16px Roboto, sans-serif; fill: #252423; }
.a { font: 13px Roboto, sans-serif; fill: #252423; }
.a.s { font-size: 10px; }
.t, .v { font-size: 11.500px; fill: #605e5c; }
.v { font-size: 11px; font-family: Roboto, sans-serif; }
.e { text-anchor: end; }
.c { text-anchor: middle; }
.lg { font-size: 13.500px; fill: #605e5c; }
.lg.b { font-size: 13px; font-weight: 700; }
svg .bar { fill: #844fc6; }
.grid { stroke: #c8c6c4; stroke-width: 1; stroke-dasharray: 1 5; }
.lead { stroke: #a6a6a6; stroke-width: 1; }
.track { fill: #ededed; }
.sthumb { fill: #b3b1b3; }
.filters { position: absolute; right: 0; top: 0; width: 41px; height: 746px; background: #9157c0; border-left: 1px solid #b9a4cf; color: #fff; display: flex; flex-direction: column; align-items: center; padding-top: 15px; }
.filters svg { stroke: #fff; stroke-width: 1.8; }
.filters svg + svg { margin: 19px 0 10px 5px; }
.filters span { writing-mode: vertical-rl; font-weight: 700; font-size: 17px; letter-spacing: 0; line-height: 20px; }

.pages { height: 44px; display: flex; }
.arrows { width: 50px; padding: 0 8px 0 7px; display: flex; justify-content: space-between; align-items: center; }
.arrows path { fill: #c8c6c4; }
.ptab { width: 95px; border-right: 1px solid #c8c6c4; display: grid; place-items: center; letter-spacing: -.1px; }
.ptab.on { margin-left: -1px; width: 96px; background: #fff; border-left: 1px solid #c8c6c4; border-bottom: 5px solid #117865; padding-top: 4px; font-weight: 500; }
.add { width: 49px; height: 40px; margin-top: 2px; background: #117865; display: grid; place-items: center; }
.add svg { stroke: #fff; stroke-width: 4; }

.vis { width: 227px; border-left: 1px solid #e1dfdd; border-right: 1px solid #d9d7d5; display: flex; flex-direction: column; }
.phead { height: 50px; display: flex; justify-content: space-between; align-items: center; padding: 0 9px 1px 10px; font-size: 17px; letter-spacing: -.35px; }
.phead b { font-weight: 600; }
.build { font-size: 14px; line-height: 20px; margin-top: -2px; letter-spacing: 0; font-weight: 500; height: 24px; padding: 0 10px; }
.modes { display: flex; gap: 43px; padding-left: 10px; height: 46px; }
.mode { width: 40px; height: 40px; display: grid; place-items: center; border-radius: 3px; }
.mode.on { background: #d2d0ce; }
.notch { stroke: #8a8886; stroke-width: 1; margin-bottom: 15px; }
.icons { display: grid; grid-template-columns: repeat(6, 23px); grid-auto-rows: 23px; gap: 12px; padding-left: 14px; height: 248px; flex: none; border-bottom: 1px solid #d9d7d5; }
.icons svg { width: 23px; height: 23px; }
.x { stroke: #3b3a39; stroke-width: 1.4; }
svg .bl { fill: #83beec; stroke: #1267b4; stroke-width: 1.3; }
.bs { stroke: #0f6cbd; stroke-width: 1.3; }
.num { font-size: 11px; fill: #2b88d8; }
.code { font-size: 20px; font-weight: 700; fill: #2b88c8; }
.wells { padding: 11px 7px 0 5px; font-size: 14.500px; letter-spacing: -.1px; }
.lab { line-height: 20px; padding-left: 9px; }
.drop { background: #fff; border: 1px dashed #c0bebc; border-radius: 2px; display: flex; align-items: center; white-space: nowrap; }
.d1 { height: 35px; margin: 6px 0 14px; padding-left: 12px; }
.d2 { height: 33px; margin-top: 5px; padding-left: 9px; }
.strong { font-weight: 600; color: #484644; letter-spacing: -.3px; }
.row { height: 34px; display: flex; justify-content: space-between; align-items: center; padding-left: 9px; font-size: 14px; }
.lab.strong { margin-bottom: 4px; font-size: 14px; }
.toggle { width: 40px; height: 20px; border: 1px solid #797775; border-radius: 10px; background: #fff; font-size: 11.500px; color: #605e5c; display: flex; align-items: center; justify-content: space-between; padding: 0 5px; }
.toggle i { width: 10px; height: 10px; border-radius: 50%; background: #605e5c; }
.toggle.dark { background: #605e5c; color: #fff; border-color: #605e5c; }
.toggle.dark i { background: #fff; }

.data { flex: 1; }
.dsearch { margin: 7px 5px 0 5px; height: 33px; background: #fff; border: 1px solid #797775; border-radius: 2px; display: flex; align-items: center; gap: 6px; padding-left: 9px; font-size: 16px; letter-spacing: 0; color: #605e5c; }
.tree { list-style: none; margin: 11px 0 0; padding: 0 0 0 11px; }
.tree li { height: 30px; display: flex; align-items: center; gap: 6px; font-size: 14px; letter-spacing: -.1px; color: #3b3a39; }
.tree svg { width: 34px; height: 16px; margin-left: -1px; }
.n { stroke: #797775; stroke-width: 1.2; }
.f { stroke: #484644; stroke-width: 1.3; }

.status { height: 29px; border-top: 1px solid #d9d7d5; display: flex; align-items: center; padding-left: 6px; color: #484644; }
.status > span:first-child { width: 1638px; letter-spacing: 0; }
.zoomer { stroke: #605e5c; margin-right: 20px; }
.pct { width: 53px; letter-spacing: 0; color: #605e5c; }
.fit { stroke: #605e5c; }
```
